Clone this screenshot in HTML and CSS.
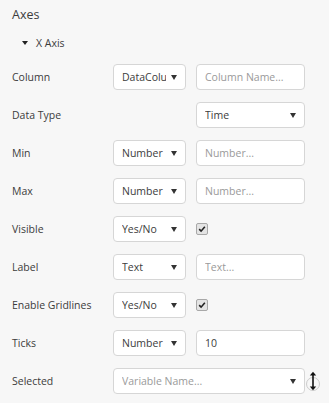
FILE: index.html
```html
<!DOCTYPE html>
<html>
<head>
<meta charset="utf-8">
<link rel="stylesheet" href="styles.css">
</head>
<body>
<div class="panel">
  <div class="title">Axes</div>
  <div class="section"><span class="caret"></span>X Axis</div>
  <div class="form">
    <div class="label">Column</div>
    <div class="select"><span class="val">DataColumn</span><span class="arrow"></span></div>
    <input class="input" placeholder="Column Name...">

    <div class="label">Data Type</div>
    <div class="select col3"><span class="val">Time</span><span class="arrow"></span></div>

    <div class="label">Min</div>
    <div class="select"><span class="val">Number</span><span class="arrow"></span></div>
    <input class="input" placeholder="Number...">

    <div class="label">Max</div>
    <div class="select"><span class="val">Number</span><span class="arrow"></span></div>
    <input class="input" placeholder="Number...">

    <div class="label">Visible</div>
    <div class="select"><span class="val">Yes/No</span><span class="arrow"></span></div>
    <div class="check-cell"><span class="check"><svg viewBox="0 0 12 12" width="12" height="12"><path d="M2.6 6.2 L4.9 8.6 L9.4 3.2" fill="none" stroke="#222" stroke-width="1.9"/></svg></span></div>

    <div class="label">Label</div>
    <div class="select"><span class="val">Text</span><span class="arrow"></span></div>
    <input class="input" placeholder="Text...">

    <div class="label">Enable Gridlines</div>
    <div class="select"><span class="val">Yes/No</span><span class="arrow"></span></div>
    <div class="check-cell"><span class="check"><svg viewBox="0 0 12 12" width="12" height="12"><path d="M2.6 6.2 L4.9 8.6 L9.4 3.2" fill="none" stroke="#222" stroke-width="1.9"/></svg></span></div>

    <div class="label">Ticks</div>
    <div class="select"><span class="val">Number</span><span class="arrow"></span></div>
    <input class="input" value="10">

    <div class="label">Selected</div>
    <div class="select wide"><span class="val ph">Variable Name...</span><span class="arrow"></span></div>
    <div class="icon-cell">
      <svg class="resize" viewBox="0 0 16 22" width="16" height="22">
        <circle cx="8" cy="14" r="6.5" fill="none" stroke="#ccc" stroke-width="1"/>
        <path d="M8 3 L8 19" stroke="#111" stroke-width="1.6"/>
        <path d="M4.8 5.6 L8 1.8 L11.2 5.6 Z" fill="#111"/>
        <path d="M4.8 16.4 L8 20.2 L11.2 16.4 Z" fill="#111"/>
      </svg>
    </div>
  </div>
</div>
</body>
</html>
```
FILE: styles.css
```css
html, body {
  margin: 0;
  padding: 0;
  background: #f7f7f7;
}
body {
  font-family: "Open Sans", "Noto Sans", sans-serif;
  color: #3c3c3c;
  font-size: 10.5px;
}
.panel {
  padding: 6px 0 0 12px;
}
.title {
  font-size: 12.5px;
  line-height: 18px;
}
.section {
  display: flex;
  align-items: center;
  margin-top: 11px;
  padding-left: 10px;
  font-size: 10.5px;
  line-height: 16px;
}
.caret {
  width: 0;
  height: 0;
  border-left: 3px solid transparent;
  border-right: 3px solid transparent;
  border-top: 4px solid #222;
  margin-right: 8px;
}
.form {
  display: grid;
  grid-template-columns: 91px 73px 109px 16px;
  column-gap: 10px;
  row-gap: 12px;
  margin-top: 13px;
  align-items: center;
}
.label {
  grid-column: 1;
  white-space: nowrap;
}
.select, .input {
  box-sizing: border-box;
  height: 26px;
  background: #fff;
  border: 1px solid #d6d6d6;
  border-radius: 4px;
  font-family: inherit;
  font-size: 10.5px;
  color: #3c3c3c;
}
.select {
  display: flex;
  align-items: center;
  padding: 0 8px 0 8px;
  overflow: hidden;
}
.select .val {
  flex: 1;
  overflow: hidden;
  white-space: nowrap;
  min-width: 0;
}
.select .val.ph {
  color: #9a9a9a;
}
.arrow {
  flex: none;
  width: 0;
  height: 0;
  margin-left: 5px;
  border-left: 3px solid transparent;
  border-right: 3px solid transparent;
  border-top: 5px solid #333;
}
.select.col3 {
  grid-column: 3;
}
.select.wide {
  grid-column: 2 / 4;
}
.input {
  width: 109px;
  padding: 0 8px;
  outline: none;
}
.input::placeholder {
  color: #9a9a9a;
}
.check-cell {
  display: flex;
  align-items: center;
}
.check {
  box-sizing: border-box;
  width: 12px;
  height: 12px;
  border: 1px solid #a8a8a8;
  border-radius: 2px;
  background: #e4e4e4;
  display: flex;
  align-items: center;
  justify-content: center;
}
.check svg {
  width: 10px;
  height: 10px;
}
.icon-cell {
  display: flex;
  align-items: center;
  margin-left: -10px;
}
.resize {
  display: block;
}
```
